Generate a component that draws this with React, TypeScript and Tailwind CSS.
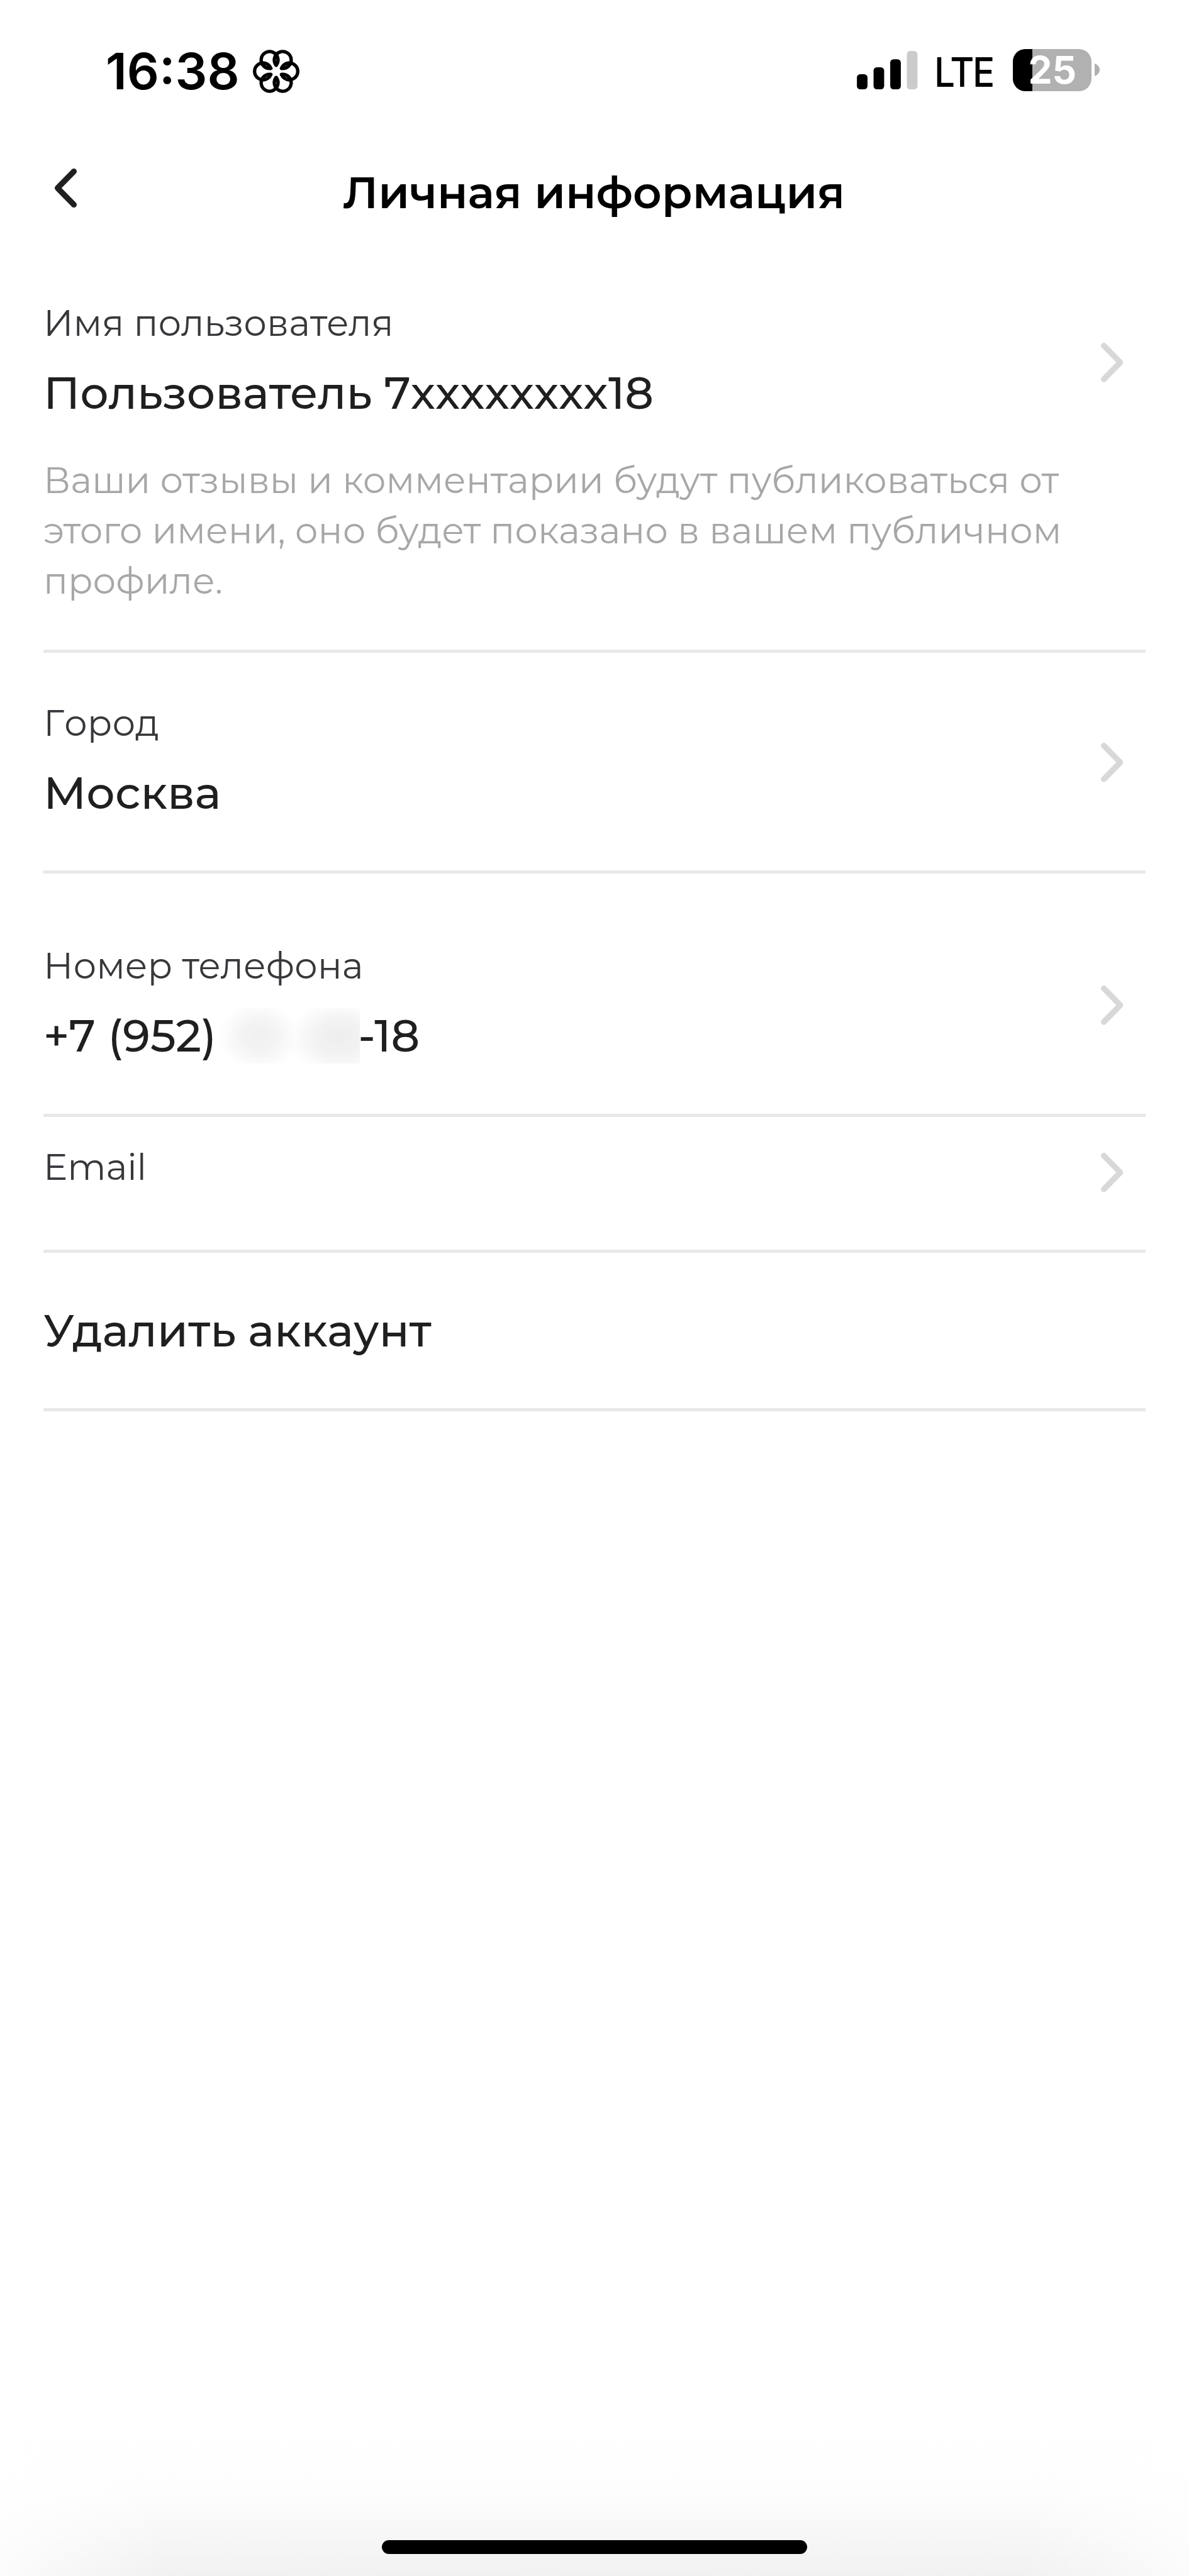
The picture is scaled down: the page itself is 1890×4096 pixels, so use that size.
import React from 'react';
import clsx from 'clsx';

const StatusBar = () => (
    <div className="flex h-[200px] w-full items-start justify-between pl-[168px] pr-[142px] font-['Inter',sans-serif] text-black">
        <div className="flex items-start">
            <span className="mt-[73px] w-[234px] text-[80px] font-semibold leading-none">16:38</span>
            <FlowerIcon />
        </div>

        <div className="flex items-start">
            <SignalIcon />
            <span className="ml-[26.5px] mt-[82.4px] w-[125px] origin-left scale-x-[0.9] text-[65px] font-medium leading-none tracking-[-0.04em]">
                LTE
            </span>
            <Battery level={25} />
        </div>
    </div>
);

/* Six overlapping petals, open in the middle */
const FlowerIcon = () => (
    <svg viewBox="-138 -128 276 256" className="mt-[79px] h-[69px] w-[74px]" fill="none" stroke="#000" strokeWidth="20" strokeLinejoin="round" strokeLinecap="round">
        {[0, 60, 120, 180, 240, 300].map((angle) => (
            <path key={angle} d="M31.5 -18.2A50 50 0 1 1 31.5 18.2" transform={`rotate(${angle})`} />
        ))}
    </svg>
);

const SignalIcon = () => (
    <svg viewBox="0 0 120 76" className="mt-[81px] h-[61px] w-[96.5px]">
        <rect x="0" y="46" width="21" height="30" rx="6.5" />
        <rect x="33" y="32.5" width="21" height="43.5" rx="6.5" />
        <rect x="66" y="16.5" width="21" height="59.5" rx="6.5" />
        <rect x="99" y="0" width="21" height="76" rx="6.5" fill="#cbcbcb" />
    </svg>
);

const Battery = ({ level }: { level: number }) => (
    <div className="mt-[78px] flex items-center">
        <div className="relative h-[66.5px] w-[125px] rounded-[20px] bg-[#b1b1b1]">
            <div className="h-full rounded-l-[20px] bg-black" style={{ width: `${level}%` }} />
            <span className="absolute left-[24.5px] top-[3px] text-[60.5px] font-bold leading-none text-white">
                {level}
            </span>
        </div>
        <svg viewBox="0 0 8 20" className="ml-[5px] h-[20px] w-[8px]">
            <path d="M0 0C5 2 8 5.5 8 10S5 18 0 20Z" fill="#b1b1b1" />
        </svg>
    </div>
);

const Header = () => (
    <header className="grid h-[240px] grid-cols-[180px_1fr_180px] items-start">
        <button className="ml-[87px] mt-[68px] w-fit">
            <svg viewBox="0 0 35 62" className="h-[62px] w-[35px]" fill="none" stroke="#202022" strokeWidth="9" strokeLinecap="round" strokeLinejoin="round">
                <path d="M30.5 4.5L4.5 31L30.5 57.5" />
            </svg>
        </button>
        <h1 className="mt-[71px] pr-[2px] text-center text-[70.8px] font-semibold leading-none text-black">
            Личная информация
        </h1>
    </header>
);

const Chevron = ({ className }: { className?: string }) => (
    <svg viewBox="0 0 44 78" className={clsx('mr-[36px] h-[62.7px] w-[35.4px] shrink-0', className)} fill="none" stroke="#d8d8da" strokeWidth="11.5" strokeLinecap="round" strokeLinejoin="round">
        <path d="M5.75 5.75L38.25 39L5.75 72.25" />
    </svg>
);

const Label = ({ className, children }: { className?: string; children: React.ReactNode }) => (
    <div className={clsx('pt-px text-[57.8px] leading-none text-[#38383c]', className)}>{children}</div>
);

const Value = ({ children }: { children: React.ReactNode }) => (
    <div className="mt-[46.5px] flex h-[71px] items-center whitespace-pre text-[71px] font-medium leading-none text-[#1f1f20]">
        {children}
    </div>
);

const Row = ({ className, children }: { className: string; children: React.ReactNode }) => (
    <section className={clsx('flex items-start justify-between border-b-[5px] border-[#e8e8e8]', className)}>
        {children}
    </section>
);

const App = () => {
    return (
        <div className="flex h-[4096px] w-full flex-col overflow-hidden bg-white font-['Montserrat','Inter',sans-serif]">
            <StatusBar />
            <Header />

            <main className="ml-[69px] mr-[69px]">
                {/* User name */}
                <Row className="h-[598.4px] pt-[44px]">
                    <div>
                        <Label>Имя пользователя</Label>
                        <Value>Пользователь 7xxxxxxxx18</Value>
                        <p className="mt-[64px] whitespace-nowrap text-[57.8px] leading-[79.7px] text-[#a7a7aa]">
                            Ваши отзывы и комментарии будут публиковаться от<br />
                            этого имени, оно будет показано в вашем публичном<br />
                            профиле.
                        </p>
                    </div>
                    <Chevron className="mt-[61.2px] -ml-[35.4px]" />
                </Row>

                {/* City */}
                <Row className="h-[350.8px] pt-[81.2px]">
                    <div>
                        <Label className="[font-kerning:none]">Город</Label>
                        <Value>Москва</Value>
                    </div>
                    <Chevron className="mt-[61.2px]" />
                </Row>

                {/* Phone */}
                <Row className="h-[386.5px] pt-[117px]">
                    <div>
                        <Label>Номер телефона</Label>
                        <Value>
                            <span className="w-[281.4px]">+7 (952)</span>
                            <span className="-my-[9px] h-[88px] w-[222px] bg-[radial-gradient(ellipse_64px_56px_at_62px_45px,#f0f0f0,#f3f3f3_40%,#fafafa_75%,transparent),radial-gradient(ellipse_84px_60px_at_190px_47px,#eeeeee,#f2f2f2_45%,#fafafa_78%,transparent)]" />
                            <span className="-ml-[3px]">-18</span>
                        </Value>
                    </div>
                    <Chevron className="mt-[61.2px]" />
                </Row>

                {/* Email */}
                <Row className="h-[216.3px] pt-[50.3px]">
                    <Label className="tracking-[-0.3px]">Email</Label>
                    <Chevron className="mt-[6.8px]" />
                </Row>

                {/* Delete account */}
                <Row className="h-[252.4px] pt-[41.5px]">
                    <Value>Удалить аккаунт</Value>
                </Row>
            </main>

            {/* Home indicator */}
            <footer className="mt-auto flex h-[228px] items-end justify-center bg-[linear-gradient(to_right,rgba(255,255,255,0.75),transparent_14%,transparent_86%,rgba(255,255,255,0.75)),linear-gradient(to_bottom,#ffffff,#fdfdfd_40%,#f8f8f8_66%,#f1f1f1)] pb-[35px]">
                <div className="h-[22.5px] w-[676px] rounded-full bg-black" />
            </footer>
        </div>
    );
};

export default App;
